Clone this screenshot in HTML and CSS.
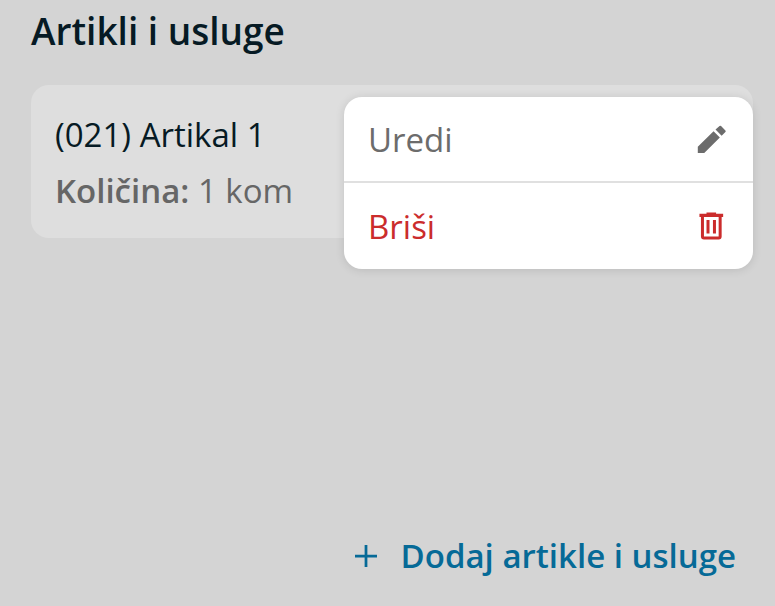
FILE: index.html
```html
<!DOCTYPE html>
<html lang="hr">
<head>
    <meta charset="UTF-8">
    <meta name="viewport" content="width=device-width, initial-scale=1.0">
    <title>Artikli i usluge</title>
    <link rel="stylesheet" href="styles.css">
</head>
<body>
    <main class="page">
        <h1 class="title">Artikli i usluge</h1>
        <section class="card">
            <h2 class="item-name">(021) Artikal 1</h2>
            <p class="item-qty"><b>Količina:</b> 1 kom</p>
            <div class="menu">
                <button class="menu-item" type="button">
                    Uredi
                    <svg class="icon" viewBox="0 0 24 24" aria-hidden="true">
                        <path d="M3.2 17.2v4.2h4.3L17.9 11l-4.2-4.2L3.2 17.2zM21.6 7.3a.7.7 0 0 0 0-1L18.700 3.400a.7.7 0 0 0-1 0l-2.700 2.300 4.100 4.100 2.500-2.500z"/>
                    </svg>
                </button>
                <button class="menu-item delete" type="button">
                    Briši
                    <svg class="icon" viewBox="0 0 24 24" aria-hidden="true">
                        <path d="M9 3v.8H4.300v2.200h1V19a2 2 0 0 0 2 2h9.800a2 2 0 0 0 2-2V6h1V3.800h-4.700V3H9zM7.300 6h9.800v13H7.300V6zM9 8v9h2V8H9zM13.300 8v9h2V8h-2z" fill-rule="evenodd"/>
                    </svg>
                </button>
            </div>
        </section>
        <button class="add-button" type="button">
            <svg class="plus" viewBox="0 0 24 24" aria-hidden="true">
                <path d="M12 0v24M0 12h24"/>
            </svg>
            Dodaj artikle i usluge
        </button>
    </main>
</body>
</html>
```

FILE: styles.css
```css
* {
    box-sizing: border-box;
}

body {
    margin: 0;
    font-family: "Open Sans", "Noto Sans", sans-serif;
    background-color: #d4d4d4;
    color: #061a24;
}

.page {
    display: flex;
    flex-direction: column;
    min-height: 100vh;
    padding: 7px 22px 26px 31px;
}

.title {
    margin: 0 0 30px;
    font-size: 37px;
    line-height: 48px;
    font-weight: 600;
}

.card {
    position: relative;
    padding: 26px 24px 23px;
    border-radius: 18px;
    background-color: #dedede;
}

.item-name {
    margin: 0 0 8px;
    font-size: 33px;
    line-height: 48px;
    font-weight: 400;
}

.item-qty {
    margin: 0;
    font-size: 33px;
    line-height: 48px;
    color: #666;
}

.item-qty b {
    font-weight: 600;
}

.menu {
    position: absolute;
    top: 12px;
    right: 0;
    width: 409px;
    border-radius: 18px;
    background-color: #fff;
    box-shadow: 0 1px 10px rgba(0, 0, 0, 0.12);
}

.menu-item {
    display: flex;
    align-items: center;
    justify-content: space-between;
    width: 100%;
    height: 86px;
    padding: 0 24px;
    border: 0;
    background: none;
    font: inherit;
    font-size: 33px;
    color: #6c6c6c;
    cursor: pointer;
}

.menu-item:first-child {
    border-bottom: 2px solid #e0e0e0;
}

.menu-item.delete {
    color: #cb2c2c;
}

.icon {
    width: 36px;
    height: 36px;
    fill: currentColor;
}

.add-button {
    display: flex;
    align-items: center;
    gap: 24px;
    align-self: flex-end;
    margin-top: auto;
    padding: 0 17px 0 0;
    border: 0;
    background: none;
    font: inherit;
    font-size: 33px;
    line-height: 48px;
    font-weight: 600;
    color: #066a97;
    cursor: pointer;
}

.plus {
    width: 22px;
    height: 22px;
    fill: none;
    stroke: currentColor;
    stroke-width: 3;
}
```
